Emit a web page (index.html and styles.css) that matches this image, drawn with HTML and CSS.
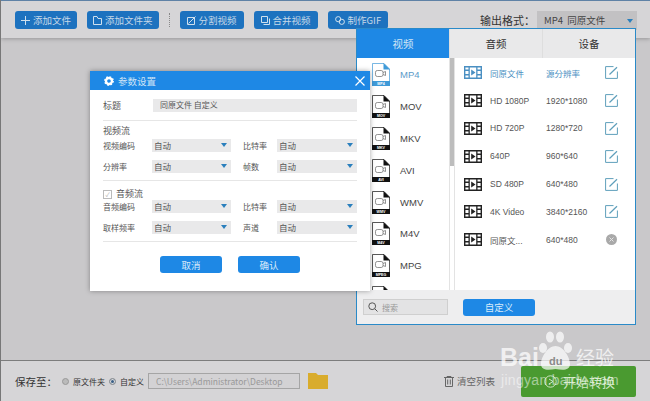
FILE: index.html
```html
<!DOCTYPE html>
<html lang="zh-CN">
<head>
    <meta charset="UTF-8">
    <title>参数设置</title>
    <link rel="stylesheet" href="styles.css">
</head>
<body>

    <svg class="defs" width="0" height="0">
        <symbol id="file-icon" viewBox="0 0 18 23">
            <path d="M.5.5H12L17.5 6V22.5H.5Z" fill="none" stroke="currentColor" stroke-width=".7"/>
            <path d="M11.5 0L18 6.5H11.5Z" fill="currentColor"/>
            <rect x="0" y="18" width="18" height="5" fill="currentColor"/>
            <rect x="3.5" y="7.5" width="7.5" height="6" rx="1.8" fill="none" stroke="#777" stroke-width=".8"/>
            <path d="M11 9.5L13.5 8.5V12.5L11 11.5" fill="none" stroke="#777" stroke-width=".8"/>
        </symbol>
        <symbol id="film-icon" viewBox="0 0 18 13">
            <path d="M.7.7H17.3V12.3H.7Z" fill="#fff" stroke="currentColor" stroke-width="1.4"/>
            <path d="M4.5 0H5.8V13H4.5ZM12.2 0H13.5V13H12.2Z" fill="currentColor"/>
            <path d="M0 3.5H5V5H0ZM0 8H5V9.5H0ZM13 3.5H18V5H13ZM13 8H18V9.5H13Z" fill="currentColor"/>
            <path d="M7.2 3.5L11.5 6.5L7.2 9.5Z" fill="currentColor"/>
        </symbol>
        <symbol id="edit-icon" viewBox="0 0 13 13">
            <path d="M8.5.6H.6V12.4H12.4V5.5" fill="none" stroke="currentColor" stroke-width="1"/>
            <path d="M4.5 8.5L12 1.2" fill="none" stroke="currentColor" stroke-width="1.2"/>
        </symbol>
    </svg>

    <header class="toolbar">
        <a class="tool-btn">
            <svg width="9" height="9" viewBox="0 0 9 9"><path d="M4.5 0V9M0 4.5H9" stroke="#cfe0ee" stroke-width="1"/></svg>
            添加文件
        </a>
        <a class="tool-btn">
            <svg width="9" height="9" viewBox="0 0 9 9"><path d="M.5 8.5V.5H4L5 2.5H8.5V8.5Z" fill="none" stroke="#cfe0ee"/></svg>
            添加文件夹
        </a>
        <span class="tool-sep"></span>
        <a class="tool-btn wide">
            <svg width="9" height="9" viewBox="0 0 9 9"><path d="M.5 1.5H7.5V8.5H.5ZM1.5 7.5L8.5 .5" fill="none" stroke="#cfe0ee"/></svg>
            分割视频
        </a>
        <a class="tool-btn wide">
            <svg width="9" height="9" viewBox="0 0 9 9"><path d="M.5.5H6.5V6.5H.5ZM8.5 2.5V8.5H2.5" fill="none" stroke="#cfe0ee"/></svg>
            合并视频
        </a>
        <a class="tool-btn wide">
            <svg width="10" height="9" viewBox="0 0 10 9"><circle cx="3.2" cy="3.2" r="2.6" fill="none" stroke="#cfe0ee"/><circle cx="6.8" cy="5.8" r="2.6" fill="none" stroke="#cfe0ee"/></svg>
            制作GIF
        </a>
        <div class="output-format">
            <span class="output-label">输出格式：</span>
            <div class="output-select">MP4&nbsp; 同原文件<i class="caret"></i></div>
        </div>
    </header>

    <main class="main-area"></main>

    <footer class="footer">
        <span class="save-label">保存至：</span>
        <span class="radio"></span><span class="radio-text">原文件夹</span>
        <span class="radio checked"></span><span class="radio-text">自定义</span>
        <div class="path-box">C:\Users\Administrator\Desktop</div>
        <svg class="folder" width="20" height="16" viewBox="0 0 20 16"><path d="M0 0H8L10 2H20V16H0Z" fill="#d9ac2c"/></svg>
        <div class="clear-list">
            <svg width="10" height="11" viewBox="0 0 10 11"><path d="M0 1.5H10M3 1.5V.5H7V1.5M1.5 1.5V10.5H8.5V1.5M3.7 3.5V8.5M6.3 3.5V8.5" fill="none" stroke="#666"/></svg>
            清空列表
        </div>
        <a class="start-btn">
            <svg width="13" height="13" viewBox="0 0 13 13"><circle cx="6.5" cy="6.5" r="5.7" fill="none" stroke="#cfe6c4"/><path d="M5 4L9 6.5L5 9" fill="none" stroke="#cfe6c4"/></svg>
            开始转换
        </a>
    </footer>

    <section class="format-panel">
        <div class="tabs">
            <div class="tab active">视频</div>
            <div class="tab">音频</div>
            <div class="tab">设备</div>
        </div>
        <div class="panel-body">
            <ul class="format-list">
                <li class="format selected"><svg class="file" width="18" height="23" viewBox="0 0 18 23"><use href="#file-icon" width="18" height="23"/><text x="9" y="22" class="file-tag">MP4</text></svg>MP4</li>
                <li class="format"><svg class="file" width="18" height="23" viewBox="0 0 18 23"><use href="#file-icon" width="18" height="23"/><text x="9" y="22" class="file-tag">MOV</text></svg>MOV</li>
                <li class="format"><svg class="file" width="18" height="23" viewBox="0 0 18 23"><use href="#file-icon" width="18" height="23"/><text x="9" y="22" class="file-tag">MKV</text></svg>MKV</li>
                <li class="format"><svg class="file" width="18" height="23" viewBox="0 0 18 23"><use href="#file-icon" width="18" height="23"/><text x="9" y="22" class="file-tag">AVI</text></svg>AVI</li>
                <li class="format"><svg class="file" width="18" height="23" viewBox="0 0 18 23"><use href="#file-icon" width="18" height="23"/><text x="9" y="22" class="file-tag">WMV</text></svg>WMV</li>
                <li class="format"><svg class="file" width="18" height="23" viewBox="0 0 18 23"><use href="#file-icon" width="18" height="23"/><text x="9" y="22" class="file-tag">M4V</text></svg>M4V</li>
                <li class="format"><svg class="file" width="18" height="23" viewBox="0 0 18 23"><use href="#file-icon" width="18" height="23"/><text x="9" y="22" class="file-tag">MPEG</text></svg>MPG</li>
                <li class="format"><svg class="file" width="18" height="23" viewBox="0 0 18 23"><use href="#file-icon" width="18" height="23"/></svg></li>
            </ul>
            <div class="scrollbar"><div class="thumb"></div></div>
            <ul class="preset-list">
                <li class="preset selected"><svg width="18" height="13"><use href="#film-icon"/></svg><span class="p-name">同原文件</span><span class="p-size">源分辨率</span><svg class="p-edit" width="13" height="13"><use href="#edit-icon"/></svg></li>
                <li class="preset"><svg width="18" height="13"><use href="#film-icon"/></svg><span class="p-name">HD 1080P</span><span class="p-size">1920*1080</span><svg class="p-edit" width="13" height="13"><use href="#edit-icon"/></svg></li>
                <li class="preset"><svg width="18" height="13"><use href="#film-icon"/></svg><span class="p-name">HD 720P</span><span class="p-size">1280*720</span><svg class="p-edit" width="13" height="13"><use href="#edit-icon"/></svg></li>
                <li class="preset"><svg width="18" height="13"><use href="#film-icon"/></svg><span class="p-name">640P</span><span class="p-size">960*640</span><svg class="p-edit" width="13" height="13"><use href="#edit-icon"/></svg></li>
                <li class="preset"><svg width="18" height="13"><use href="#film-icon"/></svg><span class="p-name">SD 480P</span><span class="p-size">640*480</span><svg class="p-edit" width="13" height="13"><use href="#edit-icon"/></svg></li>
                <li class="preset"><svg width="18" height="13"><use href="#film-icon"/></svg><span class="p-name">4K Video</span><span class="p-size">3840*2160</span><svg class="p-edit" width="13" height="13"><use href="#edit-icon"/></svg></li>
                <li class="preset"><svg width="18" height="13"><use href="#film-icon"/></svg><span class="p-name">同原文...</span><span class="p-size">640*480</span><svg class="p-edit p-remove" width="11" height="11" viewBox="0 0 11 11"><circle cx="5.5" cy="5.5" r="5.5" fill="#a9a9a9"/><path d="M3.5 3.5L7.5 7.5M7.5 3.5L3.5 7.5" stroke="#e4e4e4"/></svg></li>
            </ul>
        </div>
        <div class="panel-foot">
            <div class="search">
                <svg width="10" height="10" viewBox="0 0 10 10"><circle cx="4.2" cy="4.2" r="3.4" fill="none" stroke="#555"/><path d="M6.8 6.8L9.5 9.5" stroke="#555"/></svg>
                搜索
            </div>
            <a class="blue-btn custom-btn">自定义</a>
        </div>
    </section>

    <section class="dialog">
        <div class="dialog-head">
            <svg width="10" height="10" viewBox="0 0 10 10"><circle cx="5" cy="5" r="3" fill="none" stroke="#fff" stroke-width="2.4"/><circle cx="5" cy="5" r="4.2" fill="none" stroke="#fff" stroke-width="1.4" stroke-dasharray="1.6 1.7"/></svg>
            <span class="dialog-title">参数设置</span>
            <svg class="dialog-close" width="10" height="10" viewBox="0 0 10 10"><path d="M.5.5L9.5 9.5M9.5.5L.5 9.5" stroke="#fff" stroke-width="1.2"/></svg>
        </div>
        <div class="dialog-body">
            <div class="title-row">
                <span class="title-label">标题</span>
                <div class="title-input">同原文件 自定义</div>
            </div>
            <div class="group">
                <div class="group-name">视频流</div>
                <div class="fields">
                    <span class="field-label">视频编码</span><div class="drop">自动<i class="caret"></i></div>
                    <span class="field-label">比特率</span><div class="drop">自动<i class="caret"></i></div>
                    <span class="field-label">分辨率</span><div class="drop">自动<i class="caret"></i></div>
                    <span class="field-label">帧数</span><div class="drop">自动<i class="caret"></i></div>
                </div>
            </div>
            <div class="group audio">
                <div class="group-name"><span class="check">✓</span>音频流</div>
                <div class="fields">
                    <span class="field-label">音频编码</span><div class="drop">自动<i class="caret"></i></div>
                    <span class="field-label">比特率</span><div class="drop">自动<i class="caret"></i></div>
                    <span class="field-label">取样频率</span><div class="drop">自动<i class="caret"></i></div>
                    <span class="field-label">声道</span><div class="drop">自动<i class="caret"></i></div>
                </div>
            </div>
            <div class="dialog-actions">
                <a class="blue-btn">取消</a>
                <a class="blue-btn">确认</a>
            </div>
        </div>
    </section>

    <!-- 水印 -->
    <div class="watermark">
        <svg class="paw" width="35" height="41" viewBox="0 0 35 41" fill="#fff"><ellipse cx="5" cy="17" rx="4" ry="5"/><ellipse cx="12" cy="6" rx="4" ry="5.5"/><ellipse cx="22" cy="6" rx="4" ry="5.5"/><ellipse cx="30" cy="17" rx="4" ry="5"/><path d="M17.5 15C25 15 32 26 32 33C32 40 24 39 17.5 38C11 39 3 40 3 33C3 26 10 15 17.5 15Z"/></svg>
        <span class="wm-du">du</span>
        <span class="wm-bai">Bai</span>
        <span class="wm-cn">经验</span>
        <span class="wm-url">jingyan.baidu.com</span>
    </div>

</body>
</html>
```

FILE: styles.css
```css
* {
    box-sizing: border-box;
}
body {
    margin: 0;
    width: 650px;
    height: 401px;
    position: relative;
    overflow: hidden;
    display: flex;
    flex-direction: column;
    font-family: "Noto Sans CJK SC", "Liberation Sans", sans-serif;
    font-size: 9px;
    color: #444;
    background-color: #c9c8ca;
    border-left: 1px solid #777;
}
ul {
    list-style: none;
    margin: 0;
    padding: 0;
}
.defs {
    position: absolute;
}
.toolbar {
    height: 38px;
    flex-shrink: 0;
    display: flex;
    align-items: center;
    padding: 1px 13px 0 14px;
    gap: 10px;
    background-color: #d6d5d7;
    border-top: 1px solid #5f82a6;
    box-shadow: 0 1px 4px rgba(0, 0, 0, 0.25);
}
.tool-btn {
    height: 18px;
    padding: 0 6px;
    display: flex;
    align-items: center;
    gap: 3px;
    font-size: 9.5px;
    color: #c6d8e8;
    white-space: nowrap;
    background-color: #1d72bf;
    border-radius: 3px;
}
.tool-btn.wide {
    padding: 0 7px;
}
.tool-sep {
    width: 1px;
    height: 14px;
    border-left: 1px dotted #888;
}
.output-format {
    margin-left: auto;
    display: flex;
    align-items: center;
    gap: 2px;
}
.output-label {
    font-size: 11px;
    color: #333;
}
.output-select {
    width: 100px;
    height: 19px;
    padding-left: 7px;
    display: flex;
    align-items: center;
    font-size: 9.5px;
    color: #444;
    background-color: #c2c1c3;
    position: relative;
}
.output-select .caret {
    right: 4px;
    top: 8px;
}
.caret {
    position: absolute;
    right: 4px;
    top: 4px;
    border-left: 3px solid transparent;
    border-right: 3px solid transparent;
    border-top: 4px solid #2a7fbd;
}
.main-area {
    flex: 1;
}
.footer {
    height: 41px;
    flex-shrink: 0;
    display: flex;
    align-items: center;
    padding: 0 14px 0 14px;
    background-color: #d6d5d7;
    border-top: 1px solid #7d7d7d;
}
.save-label {
    font-size: 10.5px;
    color: #333;
    width: 47px;
}
.radio {
    width: 7px;
    height: 7px;
    margin-right: 4px;
    border-radius: 50%;
    background-color: #bbb;
    border: 1px solid #999;
}
.radio.checked {
    background-color: #3a5f86;
    box-shadow: inset 0 0 0 1px #ddd;
}
.radio-text {
    font-size: 8px;
    margin-right: 4px;
    color: #333;
    white-space: nowrap;
}
.path-box {
    width: 152px;
    height: 16px;
    padding-left: 7px;
    line-height: 14px;
    font-size: 8.5px;
    color: #999;
    border: 1px solid #a5a5a5;
    background-color: #d3d2d4;
}
.folder {
    margin-left: 8px;
}
.clear-list {
    margin-left: auto;
    display: flex;
    align-items: center;
    gap: 3px;
    font-size: 9.5px;
    color: #666;
}
.start-btn {
    width: 115px;
    height: 31px;
    margin-left: 26px;
    padding-left: 2px;
    display: flex;
    align-items: center;
    justify-content: center;
    gap: 6px;
    font-size: 13px;
    color: #cfe6c4;
    background-color: #4a9a30;
    border-radius: 2px;
}
.format-panel {
    position: absolute;
    left: 355px;
    top: 28px;
    width: 280px;
    height: 297px;
    display: flex;
    flex-direction: column;
    background-color: #fff;
    border: 1px solid #2a8ac8;
}
.tabs {
    height: 29px;
    flex-shrink: 0;
    display: flex;
}
.tab {
    flex: 1;
    display: flex;
    align-items: center;
    justify-content: center;
    font-size: 10.5px;
    color: #333;
    background-color: #e9e9ea;
    border-left: 1px solid #dedede;
}
.tab.active {
    color: #cfe4f5;
    background-color: #1e88e5;
    border-left: none;
}
.panel-body {
    flex: 1;
    min-height: 0;
    display: flex;
}
.format-list {
    width: 92px;
    padding-top: 1px;
    overflow: hidden;
}
.format {
    height: 31.8px;
    padding-left: 15px;
    display: flex;
    align-items: center;
    gap: 10px;
    font-family: "Liberation Sans", sans-serif;
    font-size: 9.5px;
    color: #444;
}
.format .file {
    flex-shrink: 0;
    color: #111;
}
.format.selected, .format.selected .file {
    color: #3f9ad8;
}
.format.selected {
    color: #5b9bc9;
}
.file-tag {
    font-size: 3.6px;
    font-weight: bold;
    text-anchor: middle;
    fill: #fff;
}
.scrollbar {
    width: 6px;
    background-color: #fff;
    border-left: 1px solid #e3e3e3;
    border-right: 1px solid #e3e3e3;
}
.thumb {
    height: 108px;
    background-color: #bdbdbd;
}
.preset-list {
    flex: 1;
    padding-top: 1px;
}
.preset {
    height: 27.8px;
    padding-left: 9px;
    display: flex;
    align-items: center;
    font-family: "Liberation Sans", "Noto Sans CJK SC", sans-serif;
    font-size: 8.5px;
    color: #555;
}
.preset svg:first-child {
    color: #222;
}
.preset.selected, .preset.selected svg:first-child {
    color: #4a8fc2;
}
.p-name {
    width: 56px;
    margin-left: 8px;
}
.p-size {
    width: 59px;
}
.p-edit {
    color: #5f9fbb;
}
.p-remove {
    margin-left: 1px;
}
.panel-foot {
    height: 34px;
    flex-shrink: 0;
    display: flex;
    align-items: center;
    padding: 0 6px;
    background-color: #eeeeef;
}
.search {
    width: 85px;
    height: 16px;
    padding-left: 4px;
    display: flex;
    align-items: center;
    gap: 4px;
    font-size: 8px;
    color: #999;
    background-color: #e3e3e4;
    border: 1px solid #cfcfcf;
}
.blue-btn {
    width: 62px;
    height: 17px;
    display: flex;
    align-items: center;
    justify-content: center;
    font-size: 9.5px;
    color: #d8ebfa;
    background-color: #1e88e5;
    border-radius: 3px;
}
.custom-btn {
    width: 72px;
    margin-left: 15px;
}
.dialog {
    position: absolute;
    left: 89px;
    top: 71px;
    width: 280px;
    height: 220px;
    background-color: #fff;
    box-shadow: 0 0 5px rgba(0, 0, 0, 0.35);
}
.dialog-head {
    height: 19px;
    padding: 0 5px 0 14px;
    display: flex;
    align-items: center;
    gap: 4px;
    background-color: #1e88e5;
}
.dialog-title {
    font-size: 9.5px;
    color: #cfe4f5;
}
.dialog-close {
    margin-left: auto;
}
.dialog-body {
    padding: 8px 13px 0 13px;
    font-size: 8px;
    color: #555;
}
.field-label {
    white-space: nowrap;
}
.field-label:nth-child(4n+3) {
    padding-left: 12px;
}
.title-row {
    display: grid;
    grid-template-columns: 50px 1fr;
    align-items: center;
    padding-bottom: 8px;
    border-bottom: 1px solid #e6e6e6;
}
.title-label {
    font-size: 9px;
    padding-top: 1px;
}
.title-input {
    height: 13px;
    padding-left: 7px;
    line-height: 12px;
    font-size: 8px;
    background-color: #e9e9ea;
}
.group {
    padding: 4px 0 7px 0;
    border-bottom: 1px solid #e6e6e6;
}
.group.audio {
    padding: 7px 0 7px 0;
}
.group-name {
    height: 12px;
    line-height: 12px;
    margin-bottom: 2px;
    display: flex;
    align-items: center;
    gap: 4px;
    font-size: 9px;
}
.group.audio .group-name {
    margin-bottom: 0;
}
.check {
    width: 9px;
    height: 9px;
    border: 1px solid #bbb;
    font-size: 6px;
    line-height: 7px;
    text-align: center;
    color: #aaa;
}
.fields {
    display: grid;
    grid-template-columns: 49px 79px 46px 80px;
    row-gap: 8px;
    align-items: center;
}
.drop {
    height: 13px;
    padding-left: 2px;
    line-height: 12px;
    font-size: 8.5px;
    background-color: #e9e9ea;
    position: relative;
}
.dialog-actions {
    margin-top: 14px;
    display: flex;
    justify-content: center;
    gap: 16px;
}
.watermark {
    position: absolute;
    left: 499px;
    top: 331px;
    width: 116px;
    height: 58px;
    color: #fff;
}
.watermark span {
    position: absolute;
    white-space: nowrap;
    font-family: "Liberation Sans", sans-serif;
    opacity: 0.72;
}
.paw {
    position: absolute;
    left: 38px;
    top: 0;
    opacity: 0.7;
}
.watermark .wm-du {
    left: 49px;
    top: 24px;
    font-size: 11px;
    font-weight: bold;
    color: #8a8a8a;
    opacity: 1;
}
.watermark .wm-bai {
    left: 0;
    top: 12px;
    font-weight: bold;
    font-size: 25px;
}
.watermark .wm-cn {
    left: 76px;
    top: 12px;
    font-size: 19px;
    font-family: "Noto Sans CJK SC", sans-serif;
}
.watermark .wm-url {
    left: 1px;
    top: 41px;
    font-size: 14px;
    letter-spacing: 0.3px;
    opacity: 0.5;
}
```
